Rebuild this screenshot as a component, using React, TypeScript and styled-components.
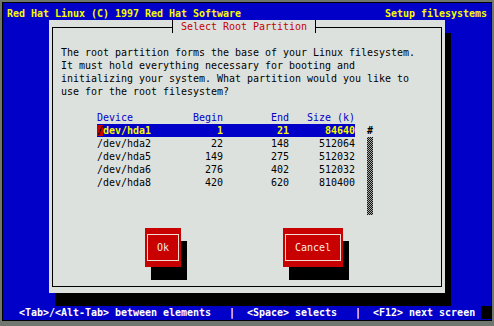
import styled, { createGlobalStyle } from "styled-components";

const GlobalStyle = createGlobalStyle`
  html, body {
    margin: 0;
    padding: 0;
    background: #6f776f;
  }
  body {
    font-family: "DejaVu Sans Mono", "Liberation Mono", monospace;
    font-size: 9.97px;
  }
`;

const colors = {
  blue: "#0000c8",
  yellow: "#f8f800",
  grey: "#dde1dd",
  red: "#c80000",
  frame: "#6f776f",
};

const Frame = styled.div`
  width: 494px;
  height: 326px;
  box-sizing: border-box;
  padding: 2px 2px 5px 2px;
  background: ${colors.frame};
`;

const Screen = styled.div`
  height: 100%;
  box-sizing: border-box;
  border: 1px solid #000;
  background: ${colors.blue};
  padding: 4px 4px 0 4px;
  display: flex;
  flex-direction: column;
  line-height: 13px;
`;

const TitleBar = styled.div`
  height: 13px;
  display: flex;
  justify-content: space-between;
  color: ${colors.yellow};
  font-weight: bold;
  white-space: pre;
`;

const Dialog = styled.div`
  margin-left: 42px;
  width: 396px;
  height: 273px;
  background: ${colors.grey};
  box-shadow: 6px 13px 0 0 #000;
  padding: 7px 3px 6px 3px;
  box-sizing: border-box;
`;

const Box = styled.div`
  position: relative;
  height: 100%;
  box-sizing: border-box;
  border: 1px solid #000;
  padding: 18px 0 0 8px;
`;

const BoxTitle = styled.div`
  position: absolute;
  top: -8px;
  left: 119px;
  height: 13px;
  padding: 0 8px 0 8px;
  border-left: 1px solid #000;
  border-right: 1px solid #000;
  background: ${colors.grey};
  color: #c40000;
  white-space: pre;
`;

const Message = styled.p`
  margin: 0;
  color: #000;
  white-space: pre;
`;

const ListArea = styled.div`
  margin: 13px 0 0 36px;
  display: flex;
  flex-direction: column;
`;

const Columns = styled.div<{ $selected?: boolean; $head?: boolean }>`
  width: 258px;
  height: 13px;
  display: grid;
  grid-template-columns: 84px 42px 66px 66px;
  white-space: pre;
  background: ${(p) => (p.$selected ? colors.blue : "transparent")};
  color: ${(p) => (p.$head ? colors.blue : p.$selected ? colors.yellow : "#000")};
  font-weight: ${(p) => (p.$selected ? "bold" : "normal")};
`;

const Num = styled.span`
  text-align: right;
`;

const Cursor = styled.span`
  background: ${colors.red};
  color: #000;
`;

const ListBody = styled.div`
  display: flex;
  gap: 12px;
`;

const Rows = styled.div`
  height: 91px;
`;

const ScrollBar = styled.div`
  width: 6px;
  display: flex;
  flex-direction: column;
`;

const Thumb = styled.div`
  height: 13px;
  color: #000;
  font-weight: bold;
  text-align: center;
`;

const Track = styled.div`
  height: 78px;
  background: repeating-conic-gradient(#111 0 25%, #a8aca8 0 50%) 0 0 / 2px 2px;
`;

const Buttons = styled.div`
  margin: 13px 0 0 84px;
  display: flex;
  gap: 102px;
`;

const Button = styled.button<{ $w: number }>`
  width: ${(p) => p.$w}px;
  height: 39px;
  padding: 6px 2px;
  box-sizing: border-box;
  border: none;
  background: ${colors.red};
  box-shadow: 6px 13px 0 0 #000;
  font: inherit;
  line-height: 13px;
  cursor: pointer;
`;

const ButtonFace = styled.span`
  display: flex;
  align-items: center;
  justify-content: center;
  height: 100%;
  box-sizing: border-box;
  border: 1px solid #f4dcd4;
  color: #f8ece4;
`;

const StatusRow = styled.div`
  margin: 13px -4px 0 -4px;
  height: 13px;
  display: flex;
  font-weight: bold;
  color: #fff;
  white-space: pre;
`;

const StatusText = styled.div`
  width: 478px;
  box-sizing: border-box;
  padding-left: 16px;
  background: ${colors.blue};
`;

const StatusRest = styled.div`
  flex: 1;
  background: #000;
`;

const partitions = [
  { dev: "/dev/hda1", begin: 1, end: 21, size: 84640 },
  { dev: "/dev/hda2", begin: 22, end: 148, size: 512064 },
  { dev: "/dev/hda5", begin: 149, end: 275, size: 512032 },
  { dev: "/dev/hda6", begin: 276, end: 402, size: 512032 },
  { dev: "/dev/hda8", begin: 420, end: 620, size: 810400 },
];

export default function App() {
  return (
    <>
      <GlobalStyle />
      <Frame>
        <Screen>
          <TitleBar>
            <span>Red Hat Linux (C) 1997 Red Hat Software</span>
            <span>Setup filesystems</span>
          </TitleBar>
          <Dialog>
            <Box>
              <BoxTitle>Select Root Partition</BoxTitle>
              <Message>
                {"The root partition forms the base of your Linux filesystem.\n" +
                  "It must hold everything necessary for booting and\n" +
                  "initializing your system. What partition would you like to\n" +
                  "use for the root filesystem?"}
              </Message>
              <ListArea>
                <Columns $head>
                  <span>Device</span>
                  <Num>Begin</Num>
                  <Num>End</Num>
                  <Num>Size (k)</Num>
                </Columns>
                <ListBody>
                  <Rows>
                    {partitions.map((p, i) => (
                      <Columns key={p.dev} $selected={i === 0}>
                        <span>
                          {i === 0 ? (
                            <>
                              <Cursor>/</Cursor>
                              {p.dev.slice(1)}
                            </>
                          ) : (
                            p.dev
                          )}
                        </span>
                        <Num>{p.begin}</Num>
                        <Num>{p.end}</Num>
                        <Num>{p.size}</Num>
                      </Columns>
                    ))}
                  </Rows>
                  <ScrollBar>
                    <Thumb>#</Thumb>
                    <Track />
                  </ScrollBar>
                </ListBody>
              </ListArea>
              <Buttons>
                <Button $w={36}>
                  <ButtonFace>Ok</ButtonFace>
                </Button>
                <Button $w={60}>
                  <ButtonFace>Cancel</ButtonFace>
                </Button>
              </Buttons>
            </Box>
          </Dialog>
          <StatusRow>
            <StatusText>
              {"<Tab>/<Alt-Tab> between elements   |  <Space> selects   |  <F12> next screen"}
            </StatusText>
            <StatusRest />
          </StatusRow>
        </Screen>
      </Frame>
    </>
  );
}
